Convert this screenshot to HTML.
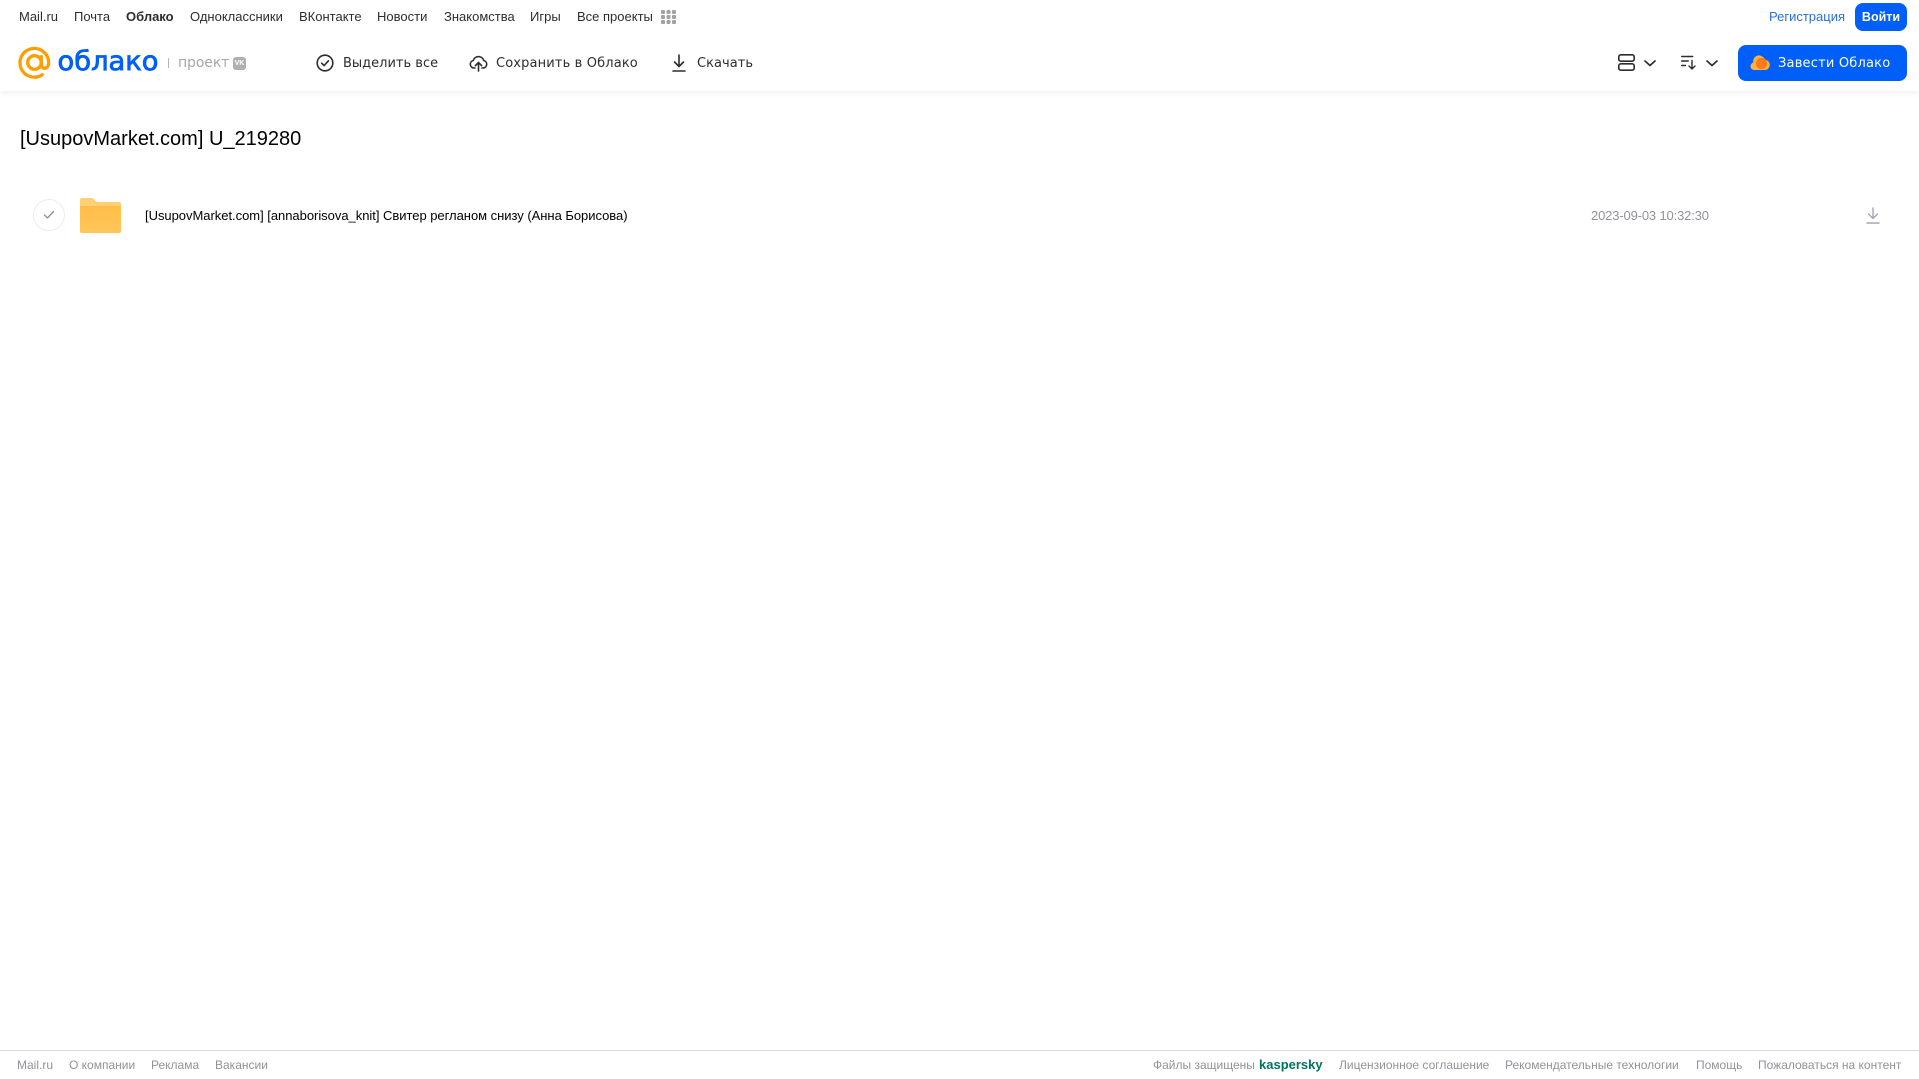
<!DOCTYPE html>
<html lang="ru"><head><meta charset="utf-8"><title>Облако</title>
<style>
html,body{margin:0;padding:0;background:#fff;}
body{width:1919px;height:1079px;position:relative;overflow:hidden;font-family:"Liberation Sans",Arial,sans-serif;}
.t{position:absolute;white-space:nowrap;line-height:16px;}
.n{top:9px;font-size:13px;color:#2c2d2e;}
.b{top:55px;font-size:13px;line-height:17px;letter-spacing:.04px;color:#2c2d2e;font-family:"DejaVu Sans",sans-serif;}
.f{top:1057px;font-size:12px;color:#919399;}
svg{position:absolute;overflow:visible;}
</style></head><body>
<div style="position:absolute;left:0;top:0;width:1919px;height:90.500px;background:#fff;box-shadow:0 2px 6px rgba(0,0,0,.07);"></div>

<span class="t n" style="left:19px">Mail.ru</span>
<span class="t n" style="left:74px">Почта</span>
<span class="t n" style="left:126px;font-weight:bold">Облако</span>
<span class="t n" style="left:190px">Одноклассники</span>
<span class="t n" style="left:299px">ВКонтакте</span>
<span class="t n" style="left:377px">Новости</span>
<span class="t n" style="left:444px">Знакомства</span>
<span class="t n" style="left:530px">Игры</span>
<span class="t n" style="left:577px">Все проекты</span>
<svg style="left:661px;top:10px" width="15" height="14" fill="#a0a2a7"><rect x="0" y="0" width="4" height="4" rx="1"/><rect x="5.500" y="0" width="4" height="4" rx="1"/><rect x="11" y="0" width="4" height="4" rx="1"/><rect x="0" y="5" width="4" height="4" rx="1"/><rect x="5.500" y="5" width="4" height="4" rx="1"/><rect x="11" y="5" width="4" height="4" rx="1"/><rect x="0" y="10" width="4" height="4" rx="1"/><rect x="5.500" y="10" width="4" height="4" rx="1"/><rect x="11" y="10" width="4" height="4" rx="1"/></svg>

<span class="t n" style="left:1769px;color:#2a6fdb">Регистрация</span>
<div style="position:absolute;left:1855px;top:3px;width:52px;height:28px;border-radius:8px;background:#005ff9;color:#fff;font-size:12.500px;font-weight:bold;line-height:28px;text-align:center">Войти</div>

<!-- logo -->
<svg style="left:18px;top:46px" width="33" height="33" viewBox="0 0 34 34" fill="none"><circle cx="17" cy="17" r="7" stroke="#ff9e00" stroke-width="3.400"/><path d="M24 11v8.500c0 5 7.600 5 7.600-2.500A14.800 14.800 0 1 0 25 29.600" stroke="#ff9e00" stroke-width="3.400" stroke-linecap="round"/></svg>
<svg style="left:56px;top:42px" width="104" height="36"><text x="1.500" y="28" font-family="DejaVu Sans, sans-serif" font-size="27" fill="#005ff9" stroke="#005ff9" stroke-width=".8" textLength="101" lengthAdjust="spacingAndGlyphs">облако</text></svg>
<div style="position:absolute;left:168px;top:58px;width:1px;height:10px;background:#b5b7bb"></div>
<span class="t" style="left:178px;top:55px;font:14px/16px 'DejaVu Sans',sans-serif;color:#a5a7ac;letter-spacing:-.1px">проект</span>
<div style="position:absolute;left:233px;top:57px;width:13px;height:13px;border-radius:3px;background:#aeb0b5;color:#fff;font:bold 7px/13px 'Liberation Sans',sans-serif;text-align:center">VK</div>

<!-- toolbar -->
<svg style="left:316px;top:54px" width="18" height="18" viewBox="0 0 18 18" fill="none" stroke="#2c2d2e" stroke-width="1.600" stroke-linecap="round" stroke-linejoin="round"><circle cx="9" cy="9" r="7.800"/><path d="M5.700 9.200l2.400 2.400 4.300-4.800"/></svg>
<span class="t b" style="left:343px;letter-spacing:0">Выделить все</span>
<svg style="left:469px;top:54px" width="19" height="18" viewBox="0 0 19 18" fill="none" stroke="#2c2d2e" stroke-width="1.600" stroke-linecap="round" stroke-linejoin="round"><path d="M6 14H4.800A3.800 3.800 0 0 1 4.300 6.500 5.400 5.400 0 0 1 14.700 6.500 3.800 3.800 0 0 1 14.200 14H13"/><path d="M9.500 17V9M6.300 11.700l3.200-3.200 3.200 3.200"/></svg>
<span class="t b" style="left:496px;letter-spacing:.14px">Сохранить в Облако</span>
<svg style="left:671px;top:54px" width="16" height="18" viewBox="0 0 16 18" fill="none" stroke="#2c2d2e" stroke-width="1.600" stroke-linecap="round" stroke-linejoin="round"><path d="M8 1v11M3.500 8L8 12.500 12.500 8M2 17h12"/></svg>
<span class="t b" style="left:697px">Скачать</span>

<!-- right controls -->
<svg style="left:1618px;top:54px" width="17" height="17" viewBox="0 0 17 17" fill="none" stroke="#2c2d2e" stroke-width="1.600"><rect x=".8" y=".8" width="15.400" height="6.400" rx="2"/><rect x=".8" y="9.800" width="15.400" height="6.400" rx="2"/></svg>
<svg style="left:1644px;top:60px" width="12" height="7" fill="none" stroke="#2c2d2e" stroke-width="1.700" stroke-linecap="round" stroke-linejoin="round"><path d="M1 1l5 4.500L11 1"/></svg>
<svg style="left:1681px;top:55px" width="16" height="15" viewBox="0 0 16 15" fill="none" stroke="#2c2d2e" stroke-width="1.400" stroke-linecap="round" stroke-linejoin="round"><path d="M.7 1.500h11M.7 6h6.500M.7 10.500h3.800M11 5.500V14M8 11l3 3 3-3"/></svg>
<svg style="left:1706px;top:60px" width="12" height="7" fill="none" stroke="#2c2d2e" stroke-width="1.700" stroke-linecap="round" stroke-linejoin="round"><path d="M1 1l5 4.500L11 1"/></svg>
<div style="position:absolute;left:1738px;top:45px;width:169px;height:36px;border-radius:8px;background:#005ff9"></div>
<svg style="left:1750px;top:54px" width="20" height="17" viewBox="0 0 20 17"><path d="M4 16a3.800 3.800 0 0 1-.6-7.500A5.600 5.600 0 0 1 12 2.500a5 5 0 0 1 3 3.200A5.200 5.200 0 0 1 15.500 16z" fill="#ffb13d"/><circle cx="11.500" cy="9.500" r="5.600" fill="#ff7a1a"/></svg>
<span class="t" style="left:1778px;top:55px;font:13px/17px 'DejaVu Sans',sans-serif;letter-spacing:.2px;color:#fff">Завести Облако</span>

<!-- heading -->
<span class="t" style="left:20px;top:125px;font-size:20px;line-height:28px;color:#000">[UsupovMarket.com] U_219280</span>

<!-- row -->
<div style="position:absolute;left:33px;top:199px;width:30px;height:30px;border:1px solid #eceded;border-radius:50%"></div>
<svg style="left:43px;top:210px" width="12" height="10" fill="none" stroke="#8f9197" stroke-width="1.300" stroke-linecap="round" stroke-linejoin="round"><path d="M1.500 5l3 3 6-6.500"/></svg>
<svg style="left:80px;top:198px" width="41" height="35" viewBox="0 0 41 35"><defs><linearGradient id="fg" x1="0" y1="0" x2="0" y2="1"><stop offset="0" stop-color="#ffbe47"/><stop offset="1" stop-color="#ffc65a"/></linearGradient></defs><path d="M2 0h9c2 0 3 1 4 2.500L17 4h22a2 2 0 0 1 2 2v27a2 2 0 0 1-2 2H2a2 2 0 0 1-2-2V2a2 2 0 0 1 2-2z" fill="#ffcf72"/><path d="M0 8h39a2 2 0 0 1 2 2v23a2 2 0 0 1-2 2H2a2 2 0 0 1-2-2z" fill="url(#fg)"/></svg>
<span class="t" style="left:145px;top:208px;font-size:13px;letter-spacing:-.03px;color:#000">[UsupovMarket.com] [annaborisova_knit] Свитер регланом снизу (Анна Борисова)</span>
<span class="t" style="left:1591px;top:208px;font-size:13px;letter-spacing:-.15px;color:#919399">2023-09-03 10:32:30</span>
<svg style="left:1866px;top:207px" width="14" height="17" viewBox="0 0 14 17" fill="none" stroke="#a5a7ab" stroke-width="1.400" stroke-linecap="round" stroke-linejoin="round"><path d="M7 1v10M2.500 7L7 11.500 11.500 7M1 16h12"/></svg>

<!-- footer -->
<div style="position:absolute;left:0;top:1050px;width:1919px;height:1px;background:#d9dadc"></div>
<span class="t f" style="left:17px">Mail.ru</span>
<span class="t f" style="left:69px">О компании</span>
<span class="t f" style="left:151px">Реклама</span>
<span class="t f" style="left:215px">Вакансии</span>
<span class="t f" style="left:1153px">Файлы защищены</span>
<span class="t f" style="left:1259px;color:#00745f;font-weight:bold;font-size:13px">kaspersky</span>
<span class="t f" style="left:1339px">Лицензионное соглашение</span>
<span class="t f" style="left:1505px">Рекомендательные технологии</span>
<span class="t f" style="left:1696px">Помощь</span>
<span class="t f" style="left:1758px">Пожаловаться на контент</span>
</body></html>
